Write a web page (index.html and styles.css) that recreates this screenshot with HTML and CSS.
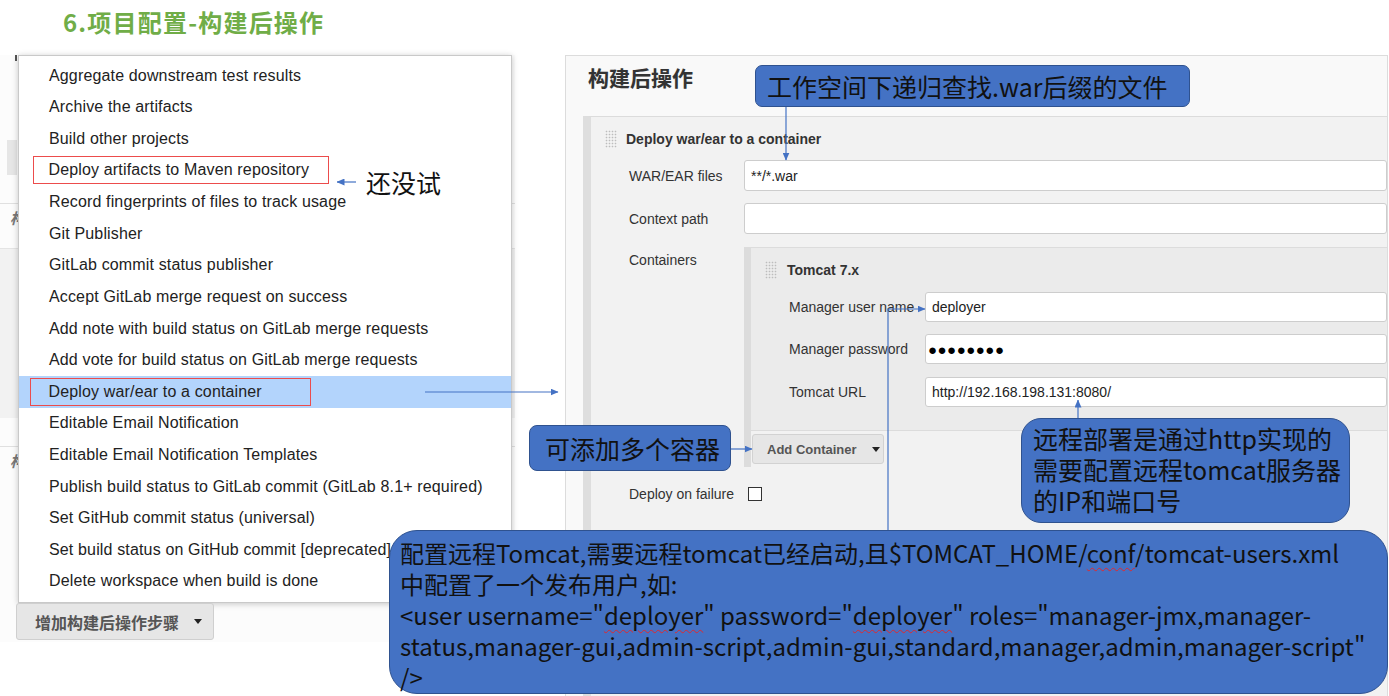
FILE: index.html
```html
<!DOCTYPE html>
<html lang="zh">
<head>
<meta charset="utf-8">
<title>项目配置-构建后操作</title>
<link rel="stylesheet" href="styles.css">
</head>
<body>
<div class="slide">
  <h1 class="title">6.项目配置-构建后操作</h1>

  <div class="stage">
    <section class="shot-left">
      <div class="bg-page">
        <div class="bg-tick"></div>
        <div class="bg-btn"></div>
        <div class="bg-sep"></div>
        <div class="bg-glyph">构</div>
        <div class="bg-sec"></div>
        <div class="bg-sep"></div>
        <div class="bg-glyph">构</div>
      </div>

      <ul class="menu">
        <li class="item">Aggregate downstream test results</li>
        <li class="item">Archive the artifacts</li>
        <li class="item">Build other projects</li>
        <li class="item"><span class="boxed boxed-maven">Deploy artifacts to Maven repository</span></li>
        <li class="item">Record fingerprints of files to track usage</li>
        <li class="item">Git Publisher</li>
        <li class="item">GitLab commit status publisher</li>
        <li class="item">Accept GitLab merge request on success</li>
        <li class="item">Add note with build status on GitLab merge requests</li>
        <li class="item">Add vote for build status on GitLab merge requests</li>
        <li class="item item-active"><span class="boxed boxed-deploy">Deploy war/ear to a container</span></li>
        <li class="item">Editable Email Notification</li>
        <li class="item">Editable Email Notification Templates</li>
        <li class="item">Publish build status to GitLab commit (GitLab 8.1+ required)</li>
        <li class="item">Set GitHub commit status (universal)</li>
        <li class="item">Set build status on GitHub commit [deprecated]</li>
        <li class="item">Delete workspace when build is done</li>
      </ul>

      <button class="add-step" type="button">增加构建后操作步骤<span class="caret"></span></button>
    </section>

    <section class="shot-right">
      <h2 class="section-heading">构建后操作</h2>
      <div class="block">
        <div class="block-head"><span class="handle"></span><span class="block-title">Deploy war/ear to a container</span></div>
        <div class="form">
          <div class="row row-first">
            <label class="label">WAR/EAR files</label>
            <div class="input">**/*.war</div>
          </div>
          <div class="row row-ctx">
            <label class="label">Context path</label>
            <div class="input"></div>
          </div>
          <div class="row row-containers">
            <label class="label label-top">Containers</label>
            <div class="repeat">
              <div class="repeat-item">
                <div class="block-head"><span class="handle"></span><span class="block-title">Tomcat 7.x</span></div>
                <div class="subform">
                  <div class="srow srow-1">
                    <label class="label">Manager user name</label>
                    <div class="input input-s">deployer</div>
                  </div>
                  <div class="srow srow-2">
                    <label class="label">Manager password</label>
                    <div class="input input-s input-pw">●●●●●●●●</div>
                  </div>
                  <div class="srow srow-3">
                    <label class="label">Tomcat URL</label>
                    <div class="input input-s">http://192.168.198.131:8080/</div>
                  </div>
                </div>
              </div>
              <button class="add-container" type="button">Add Container<span class="caret"></span></button>
            </div>
          </div>
          <div class="row row-fail">
            <label class="label">Deploy on failure</label>
            <span class="checkbox"></span>
          </div>
        </div>
      </div>
    </section>
  </div>

  <div class="note-try">还没试</div>

  <svg class="arrows" width="1389" height="696" viewBox="0 0 1389 696">
    <defs>
      <marker id="ah" markerWidth="8" markerHeight="7" refX="7.5" refY="3.5" orient="auto" markerUnits="userSpaceOnUse">
        <path d="M0,0 L8,3.5 L0,7 Z" fill="#4472c4"/>
      </marker>
    </defs>
    <g stroke="#4472c4" stroke-width="1.2" fill="none">
      <line x1="356" y1="182" x2="337" y2="182" marker-end="url(#ah)"/>
      <line x1="425" y1="392" x2="558" y2="392" marker-end="url(#ah)"/>
      <line x1="786" y1="107" x2="786" y2="160" marker-end="url(#ah)"/>
      <line x1="731" y1="449" x2="752" y2="449" marker-end="url(#ah)"/>
      <line x1="1078" y1="418" x2="1078" y2="400" marker-end="url(#ah)"/>
      <polyline points="888,530 888,309 925,309" marker-end="url(#ah)"/>
    </g>
  </svg>

  <div class="callout callout-ws">工作空间下递归查找.war后缀的文件</div>
  <div class="callout callout-multi">可添加多个容器</div>
  <div class="callout callout-http">
    <span class="cl">远程部署是通过http实现的</span>
    <span class="cl">需要配置远程tomcat服务器</span>
    <span class="cl">的IP和端口号</span>
  </div>
  <div class="callout callout-users">
    <span class="cl">配置远程Tomcat,需要远程tomcat已经启动,且$TOMCAT_HOME/<span class="sq">conf</span>/tomcat-users.xml</span>
    <span class="cl">中配置了一个发布用户,如:</span>
    <span class="cl">&lt;user username=&quot;<span class="sq">deployer</span>&quot; password=&quot;<span class="sq">deployer</span>&quot; roles=&quot;manager-jmx,manager-</span>
    <span class="cl">status,manager-gui,admin-script,admin-gui,standard,manager,admin,manager-script&quot;</span>
    <span class="cl">/&gt;</span>
  </div>
</div>
</body>
</html>
```

FILE: styles.css
```css
* { box-sizing: border-box; }
html, body { margin: 0; padding: 0; }
body {
  width: 1389px;
  height: 696px;
  overflow: hidden;
  background: #fff;
  font-family: "Liberation Sans", Arial, sans-serif;
}
.slide { position: relative; width: 1389px; height: 696px; }

.title {
  margin: 0;
  height: 55px;
  padding: 8px 0 0 63px;
  font: 700 24px/28px "Noto Sans CJK SC", sans-serif;
  color: #70ad47;
  letter-spacing: 1.2px;
}

.stage { display: flex; height: 641px; }

/* ---------- left screenshot ---------- */
.shot-left {
  position: relative;
  flex: none;
  width: 515px;
  height: 587px;
  display: flex;
  flex-direction: column;
  justify-content: flex-end;
  padding: 0 0 2px 16px;
  background: #fff;
}
.bg-page {
  position: absolute;
  inset: 0;
  display: flex;
  flex-direction: column;
  background: #fcfcfc;
}
.bg-tick { width: 2px; height: 6px; margin-left: 15px; background: #555; }
.bg-btn { width: 10px; height: 35px; margin: 79px 0 0 7px; background: #e6e6e6; }
.bg-sep { height: 1px; margin-top: 28px; background: #e0e0e0; }
.bg-glyph {
  margin: 6px 0 0 10px;
  font: italic 700 15px/16px "Noto Sans CJK SC", sans-serif;
  color: #777;
}
.bg-sec { height: 170px; margin-top: 22px; background: #f2f2f2; border-top: 1px solid #e4e4e4; }

.menu {
  position: absolute;
  left: 18px;
  top: 0;
  width: 494px;
  margin: 0;
  padding: 4px 0 5px;
  list-style: none;
  background: #fff;
  border: 1px solid #c9c9c9;
  box-shadow: 0 1px 6px rgba(0,0,0,0.22);
  z-index: 1;
}
.item {
  height: 31.6px;
  display: flex;
  align-items: center;
  padding-left: 30px;
  font-size: 16px;
  letter-spacing: 0.15px;
  color: #222;
  white-space: nowrap;
}
.item-active { background: #b3d4fc; }
.boxed {
  display: flex;
  align-items: center;
  height: 28px;
  border: 1.5px solid #ec4c4c;
}
.boxed-maven { width: 296px; margin-left: -16px; padding-left: 14.5px; margin-top: -1px; }
.boxed-deploy { width: 281px; margin-left: -19px; padding-left: 17.5px; }

.add-step {
  position: relative;
  z-index: 2;
  width: 198px;
  height: 37px;
  display: flex;
  align-items: center;
  padding: 0 0 0 18px;
  border: 1px solid #cfcfcf;
  border-radius: 3px;
  background: #e6e6e6;
  font: 700 16px/20px "Noto Sans CJK SC", sans-serif;
  color: #555;
  white-space: nowrap;
}
.add-step .caret { margin-left: 15px; }
.caret {
  display: inline-block;
  flex: none;
  width: 0;
  height: 0;
  border-left: 4px solid transparent;
  border-right: 4px solid transparent;
  border-top: 5px solid #222;
}

/* ---------- right screenshot ---------- */
.shot-right {
  flex: none;
  margin-left: 50px;
  width: 823px;
  height: 641px;
  display: flex;
  flex-direction: column;
  border: 1px solid #dcdcdc;
  border-bottom: none;
  background: #f9f9f9;
  padding-left: 17px;
}
.section-heading {
  margin: 0 0 0 5px;
  height: 60px;
  font: 700 21px/42px "Noto Sans CJK SC", sans-serif;
  color: #333;
  text-shadow: 0 0 1px rgba(0,0,0,0.15);
}
.block {
  flex: 1;
  border-left: 8px solid #dedede;
  border-top: 1px solid #dcdcdc;
  background: #f2f2f2;
  padding-left: 14px;
}
.block-head {
  display: flex;
  align-items: center;
  height: 22px;
  margin-top: 11px;
}
.handle {
  width: 12px;
  height: 18px;
  margin-right: 9px;
  background-image: radial-gradient(circle, #bdbdbd 0.7px, transparent 1.1px);
  background-size: 3px 3px;
}
.repeat-item .handle { margin-right: 10px; }
.block-title { font-weight: 700; font-size: 14px; color: #333; }

.form { margin-left: 24px; }
.row {
  display: grid;
  grid-template-columns: 115px 1fr;
  align-items: center;
}
.row-first { margin-top: 10px; }
.row-ctx { margin-top: 12px; }
.row-containers { margin-top: 13px; align-items: start; }
.row-fail { margin-top: 19px; }
.label { font-size: 14px; line-height: 16px; color: #333; white-space: nowrap; }
.label-top { padding-top: 5px; }

.input {
  height: 31px;
  display: flex;
  align-items: center;
  padding-left: 6px;
  background: #fff;
  border: 1px solid #cdcdcd;
  border-radius: 3px;
  font-size: 14px;
  color: #222;
}
.input-s { height: 30px; }
.input-pw { font-size: 15px; letter-spacing: 0.5px; padding-left: 2px; color: #000; }

.repeat { border-left: 7px solid #dcdcdc; }
.repeat-item {
  background: #ebebeb;
  border-top: 1px solid #dcdcdc;
  border-bottom: 1px solid #dcdcdc;
  padding: 0 0 23px 14px;
}
.subform { margin-left: 24px; }
.srow {
  display: grid;
  grid-template-columns: 136px 1fr;
  align-items: center;
}
.srow-1 { margin-top: 11px; }
.srow-2 { margin-top: 12px; }
.srow-3 { margin-top: 13px; }

.add-container {
  display: flex;
  align-items: center;
  width: 132px;
  height: 30px;
  margin: 3px 0 3px 1px;
  padding: 0 0 0 14px;
  border: 1px solid #d2d2d2;
  border-radius: 3px;
  background: #e6e6e6;
  font: 700 13px "Liberation Sans", Arial, sans-serif;
  color: #555;
  white-space: nowrap;
}
.add-container .caret { margin-left: 15px; }

.checkbox {
  width: 14px;
  height: 14px;
  margin-left: 4px;
  background: #fff;
  border: 1px solid #333;
}

/* ---------- annotations ---------- */
.note-try {
  position: absolute;
  left: 366px;
  top: 166px;
  font: 25px/32px "Noto Sans CJK SC", sans-serif;
  color: #111;
  z-index: 3;
}
.arrows { position: absolute; left: 0; top: 0; z-index: 4; pointer-events: none; }

.callout {
  position: absolute;
  z-index: 5;
  background: #4472c4;
  border: 1px solid #2f528f;
  color: #111;
  font: 25px/31px "Noto Sans CJK SC", sans-serif;
  white-space: nowrap;
}
.callout-ws {
  left: 755px; top: 65px; width: 435px; height: 42px;
  border-radius: 7px;
  padding: 4px 0 0 11px;
  line-height: 33px;
}
.callout-multi {
  left: 529px; top: 425px; width: 202px; height: 46px;
  border-radius: 8px;
  padding: 7px 0 0 15px;
}
.callout-http {
  left: 1021px; top: 418px; width: 329px; height: 105px;
  border-radius: 20px;
  padding: 4px 0 0 11px;
  display: flex;
  flex-direction: column;
}
.callout-users {
  left: 389px; top: 530px; width: 999px; height: 164px;
  border-radius: 28px;
  padding: 6px 0 0 10px;
  font-size: 24px;
  line-height: 31px;
  display: flex;
  flex-direction: column;
}
.cl { display: block; height: 31px; overflow: visible; }
.sq {
  text-decoration: underline wavy #e0282e;
  text-decoration-thickness: 1px;
  text-underline-offset: 4px;
}
```
